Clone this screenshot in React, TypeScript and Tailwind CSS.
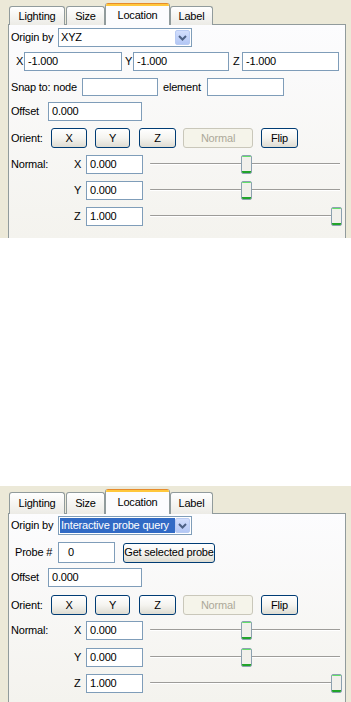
import React from "react";

function Input({ w, text, pl = 3 }: { w: number; text: string; pl?: number }) {
  return (
    <div
      className="h-[19px] border border-[#7F9DB9] bg-white flex items-center shrink-0"
      style={{ width: w, paddingLeft: pl }}
    >
      {text}
    </div>
  );
}

function Btn({ w, label, disabled = false, h = 20 }: { w: number; label: string; disabled?: boolean; h?: number }) {
  return disabled ? (
    <div
      className="shrink-0 rounded-[3px] border border-[#C9C7BA] bg-[#F5F4EA] text-[#ACA899] flex items-center justify-center whitespace-nowrap"
      style={{ width: w, height: h }}
    >
      {label}
    </div>
  ) : (
    <div
      className="shrink-0 rounded-[3px] border border-[#003C74] bg-linear-to-b from-white via-[#F5F4F0] to-[#DEDCD2] flex items-center justify-center whitespace-nowrap"
      style={{ width: w, height: h }}
    >
      {label}
    </div>
  );
}

function Chevron() {
  return (
    <svg width="9" height="6" viewBox="0 0 9 6">
      <polyline points="1,1 4.5,4.5 8,1" fill="none" stroke="#4D6185" strokeWidth="2" />
    </svg>
  );
}

function Select({ text, highlighted = false }: { text: string; highlighted?: boolean }) {
  return (
    <div className="w-[134px] h-[19px] border border-[#7F9DB9] bg-white flex items-stretch p-[1px] shrink-0">
      <div
        className={
          highlighted
            ? "flex-1 bg-[#316AC5] text-white flex items-center pl-[1px] whitespace-nowrap overflow-hidden"
            : "flex-1 flex items-center pl-[1px]"
        }
      >
        {text}
      </div>
      <div className="w-[15px] rounded-[2px] border border-[#B9CBF3] bg-linear-to-b from-[#D2DEFC] to-[#B3C7F5] flex items-center justify-center">
        <Chevron />
      </div>
    </div>
  );
}

function Slider({ left }: { left: number }) {
  return (
    <div className="relative w-[190px] h-[19px] ml-[7px] shrink-0">
      <div className="absolute left-0 right-0 top-[8px] h-[1px] bg-[#9D9C99] rounded-l" />
      <div className="absolute left-0 right-0 top-[9px] h-[1px] bg-white" />
      <div
        className="absolute top-0 w-[11px] h-[19px] rounded-[2px] border border-[#8CA1B0] bg-[#F1F0EB] overflow-hidden flex flex-col justify-between"
        style={{ left }}
      >
        <div className="h-[1px] bg-[#63DF6A]" />
        <div className="h-[2px] bg-[#21A32A]" />
      </div>
    </div>
  );
}

function Tabs({ big }: { big: boolean }) {
  const inH = big ? "h-[22px]" : "h-[19px]";
  const selH = big ? "h-[25px]" : "h-[22px]";
  const rowH = big ? "h-[25px]" : "h-[22px]";
  const tab =
    "rounded-t-[3px] border border-b-0 border-[#919B9C] bg-linear-to-b from-white to-[#ECEBE6] flex items-center justify-center shrink-0";
  return (
    <div className={`flex items-end ${rowH} -mb-[1px] relative z-10`}>
      <div className={`${tab} ${inH} w-[56px] ml-[1px]`}>Lighting</div>
      <div className={`${tab} ${inH} w-[39px] ml-[1px]`}>Size</div>
      <div
        className={`${selH} w-[65px] rounded-t-[3px] border-x border-[#919B9C] bg-[#FCFCFE] flex flex-col shrink-0 overflow-hidden`}
      >
        <div className="h-[1px] bg-[#E68B2C]" />
        <div className="h-[2px] bg-[#FFC73C]" />
        <div className="flex-1 flex items-center justify-center pb-[1px]">Location</div>
      </div>
      <div className={`${tab} ${inH} w-[43px]`}>Label</div>
    </div>
  );
}

function OrientRow({ mt }: { mt: number }) {
  return (
    <div className="flex items-center h-[20px]" style={{ marginTop: mt }}>
      <span className="w-[40px] shrink-0">Orient:</span>
      <Btn w={36} label="X" />
      <div className="ml-[8px]">
        <Btn w={35} label="Y" />
      </div>
      <div className="ml-[9px]">
        <Btn w={37} label="Z" />
      </div>
      <div className="ml-[7px]">
        <Btn w={70} label="Normal" disabled />
      </div>
      <div className="ml-[8px]">
        <Btn w={37} label="Flip" />
      </div>
    </div>
  );
}

function NormalRow({ mt, first, axis, value, thumb }: { mt: number; first?: boolean; axis: string; value: string; thumb: number }) {
  return (
    <div className="flex items-center h-[19px]" style={{ marginTop: mt }}>
      <span className="w-[63px] shrink-0">{first ? "Normal:" : ""}</span>
      <span className="w-[12px] shrink-0">{axis}</span>
      <Input w={57} text={value} />
      <Slider left={thumb} />
    </div>
  );
}

function OffsetRow({ mt }: { mt: number }) {
  return (
    <div className="flex items-center h-[19px]" style={{ marginTop: mt }}>
      <span className="w-[37px] shrink-0">Offset</span>
      <Input w={94} text="0.000" />
    </div>
  );
}

function NormalRows({ mts }: { mts: number[] }) {
  return (
    <>
      <NormalRow mt={mts[0]} first axis="X" value="0.000" thumb={91} />
      <NormalRow mt={mts[1]} axis="Y" value="0.000" thumb={91} />
      <NormalRow mt={mts[2]} axis="Z" value="1.000" thumb={181} />
    </>
  );
}

function Frame({ big, h, children }: { big: boolean; h: number; children: React.ReactNode }) {
  return (
    <div className="bg-[#ECE9D8] pt-[3px] pl-[8px] pr-[5px] flex flex-col overflow-hidden shrink-0" style={{ height: h }}>
      <Tabs big={big} />
      <div className="flex-1 border border-b-0 border-[#919B9C] bg-linear-to-b from-[#FCFCFE] to-[#F4F3EE] pl-[2px] flex flex-col">
        {children}
      </div>
    </div>
  );
}

export default function App() {
  return (
    <div className="w-[351px] h-[702px] bg-white flex flex-col overflow-hidden text-[11px] tracking-[-0.2px] leading-none text-black font-['Liberation_Sans',Arial,sans-serif]">
      <Frame big={false} h={238}>
        <div className="flex items-center h-[19px] mt-[3px]">
          <span className="w-[47px] shrink-0">Origin by</span>
          <Select text="XYZ" />
        </div>
        <div className="flex items-center h-[19px] mt-[5px]">
          <span className="w-[8px] ml-[5px] shrink-0">X</span>
          <Input w={98} text="-1.000" />
          <span className="w-[11px] pl-[3px] shrink-0">Y</span>
          <Input w={96} text="-1.000" />
          <span className="w-[13px] pl-[4px] shrink-0">Z</span>
          <Input w={97} text="-1.000" />
        </div>
        <div className="flex items-center h-[18px] mt-[7px]">
          <span className="w-[71px] shrink-0 whitespace-nowrap">Snap to: node</span>
          <div className="h-[18px] w-[76px] border border-[#7F9DB9] bg-white shrink-0" />
          <span className="w-[49px] pl-[5px] shrink-0">element</span>
          <div className="h-[18px] w-[77px] border border-[#7F9DB9] bg-white shrink-0" />
        </div>
        <OffsetRow mt={6} />
        <OrientRow mt={7} />
        <NormalRows mts={[7, 7, 7]} />
      </Frame>
      <div className="h-[248px] shrink-0" />
      <Frame big h={216}>
        <div className="flex items-center h-[19px] mt-[2px]">
          <span className="w-[47px] shrink-0">Origin by</span>
          <Select text="Interactive probe query" highlighted />
        </div>
        <div className="flex items-center h-[21px] mt-[7px]">
          <span className="w-[47px] pl-[4px] shrink-0">Probe #</span>
          <div className="h-[21px] w-[57px] border border-[#7F9DB9] bg-white flex items-center pl-[9px] shrink-0">0</div>
          <div className="ml-[8px]">
            <Btn w={92} h={20} label="Get selected probe" />
          </div>
        </div>
        <OffsetRow mt={5} />
        <OrientRow mt={8} />
        <NormalRows mts={[6, 8, 7]} />
      </Frame>
    </div>
  );
}
